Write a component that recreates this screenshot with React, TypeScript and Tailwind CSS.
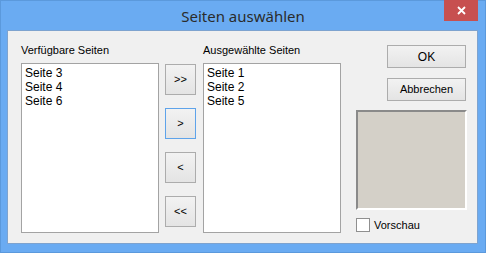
import React from "react";

const dlgFont = { fontFamily: '"Liberation Sans", Arial, sans-serif' };

const ListBox = ({ items }: { items: string[] }) => (
  <div className="w-[138px] h-[170px] bg-white border border-[#a3a3a3] pl-[3px] pt-[2px]">
    {items.map((item) => (
      <div key={item} className="text-[12px] leading-[14px] text-black">
        {item}
      </div>
    ))}
  </div>
);

const DlgButton = ({
  label,
  focused,
  className,
}: {
  label: string;
  focused?: boolean;
  className: string;
}) => (
  <button
    className={`${className} flex items-center justify-center border text-[11px] text-black bg-gradient-to-b from-[#f2f2f2] to-[#e4e4e4] ${
      focused ? "border-[#5ea3ea]" : "border-[#acacac]"
    }`}
  >
    {label}
  </button>
);

export default function App() {
  return (
    <div
      className="w-[486px] h-[253px] bg-[#6aabf2] border border-[#5b99dc] flex flex-col"
      style={dlgFont}
    >
      {/* title bar */}
      <div className="relative h-[29px] flex items-center justify-center">
        <span
          className="text-[15px] text-[#2b2b2b] pt-[1px]"
          style={{ fontFamily: '"Noto Sans", "Open Sans", sans-serif' }}
        >
          Seiten auswählen
        </span>
        <button className="absolute top-[-1px] right-[7px] w-[34px] h-[21px] bg-[#c75050] flex items-center justify-center">
          <svg width="9" height="9" viewBox="0 0 9 9">
            <path d="M1 1 L8 8 M8 1 L1 8" stroke="white" strokeWidth="1.8" />
          </svg>
        </button>
      </div>

      {/* client area */}
      <div className="ml-[6px] w-[471px] h-[214px] border border-[#7ea3cf] bg-[#f0f0f0] flex pl-[13px]">
        {/* verfügbare */}
        <div className="flex flex-col pt-[13px]">
          <div className="text-[11px] leading-[13px] text-black mb-[6px]">Verfügbare Seiten</div>
          <ListBox items={["Seite 3", "Seite 4", "Seite 6"]} />
        </div>

        {/* move buttons */}
        <div className="flex flex-col gap-[13px] pt-[33px] ml-[6px]">
          <DlgButton label=">>" className="w-[31px] h-[31px]" />
          <DlgButton label=">" focused className="w-[31px] h-[31px]" />
          <DlgButton label="<" className="w-[31px] h-[31px]" />
          <DlgButton label="<<" className="w-[31px] h-[31px]" />
        </div>

        {/* ausgewählte */}
        <div className="flex flex-col pt-[13px] ml-[7px]">
          <div className="text-[11px] leading-[13px] text-black mb-[6px]">Ausgewählte Seiten</div>
          <ListBox items={["Seite 1", "Seite 2", "Seite 5"]} />
        </div>

        {/* right column */}
        <div className="flex flex-col pt-[14px] ml-[15px] w-[111px]">
          <DlgButton label="OK" className="ml-[31px] w-[79px] h-[23px] text-[12px]" />
          <DlgButton label="Abbrechen" className="ml-[31px] mt-[10px] w-[79px] h-[23px]" />
          <div className="mt-[9px] w-[111px] h-[100px] bg-[#d4d0c8] border-2 border-t-[#8a8a8a] border-l-[#8a8a8a] border-r-white border-b-white" />
          <label className="mt-[7px] flex items-center gap-[4px] text-[11px] text-black">
            <span className="w-[14px] h-[14px] bg-white border border-[#8f8f8f]" />
            Vorschau
          </label>
        </div>
      </div>
    </div>
  );
}
